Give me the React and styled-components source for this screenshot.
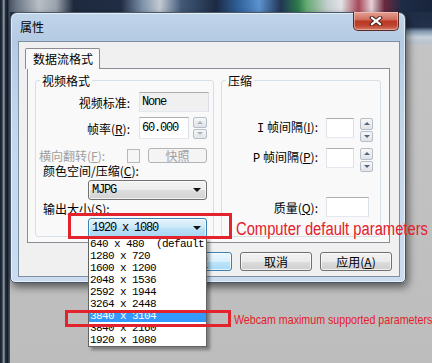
import React from "react";
import styled, { createGlobalStyle } from "styled-components";

const GlobalStyle = createGlobalStyle`
  html, body {
    margin: 0;
    padding: 0;
  }
  body {
    width: 432px;
    height: 363px;
    overflow: hidden;
    font-family: "Noto Sans CJK SC", "Liberation Sans", sans-serif;
    font-size: 12px;
  }
`;

const Screen = styled.div`
  position: relative;
  width: 432px;
  height: 363px;
  overflow: hidden;
  box-sizing: border-box;
  padding: 12px 0 0 10px;
  display: flex;
  align-items: flex-start;
  background:
    linear-gradient(90deg, #141b25 0, #2c3746 2px, #5d6c80 3px, #a7b4c2 4px, #2a3442 5px, #111821 8px, #4c5a6b 9px, #39444f 10px, transparent 10px) left top / 10px 100% no-repeat,
    linear-gradient(90deg, #1b2536 0%, #6f7a88 4%, #b9bfc6 9%, #9aa3ad 13%, #1e2a3e 17%, #202d44 28%, #7f93aa 33%, #c3cbd4 37%, #425a78 42%, #1c2b43 50%, #2f5f98 55%, #5b93cf 60%, #223655 65%, #2c7b4c 69%, #67ab74 71%, #c8d0d2 76%, #e0e2e6 79%, #a8485a 83%, #e7d2d8 86%, #6b2a3e 89%, #1e2c46 93%, #18243a 100%) left top / 100% 12px no-repeat,
    linear-gradient(180deg, #1d2a42 0, #22304a 27px, #7e93ab 31px, #c6d0da 37px, #b9c4cf 42px, #c4c4c4 46px, #bdbdbd 100%);
`;

const Dialog = styled.div`
  position: relative;
  width: 396px;
  height: 271px;
  box-sizing: border-box;
  border: 1px solid #46566a;
  border-radius: 7px 7px 5px 5px;
  background: linear-gradient(180deg, #c1d5ea 0%, #b5cbe3 10%, #c4d7ec 45%, #cbdcef 100%);
  box-shadow: 2px 4px 9px rgba(0, 0, 0, 0.55), inset 0 0 0 1px rgba(255, 255, 255, 0.6);
  padding: 0 5px 5px 7px;
  display: flex;
  flex-direction: column;
`;

const TitleBar = styled.div`
  height: 28px;
  display: flex;
  align-items: center;
  justify-content: space-between;
  padding-left: 2px;
`;

const Title = styled.span`
  font-size: 12px;
  line-height: 14px;
  color: #000;
`;

const CloseButton = styled.div`
  align-self: flex-start;
  margin-top: -1px;
  margin-right: 1px;
  width: 46px;
  height: 19px;
  box-sizing: border-box;
  border: 1px solid #5b2a26;
  border-top: none;
  border-radius: 0 0 5px 5px;
  background: linear-gradient(180deg, #e3a195 0%, #d27260 40%, #bb3924 52%, #bd4430 75%, #d57c68 100%);
  box-shadow: inset 0 0 0 1px rgba(255, 220, 210, 0.45);
  display: flex;
  align-items: center;
  justify-content: center;
`;

const Client = styled.div`
  flex: 1;
  background: #f0f0f0;
  border: 1px solid #7f8fa3;
  display: flex;
  flex-direction: column;
  padding: 6px 7px 5px 6px;
`;

const TabStrip = styled.div`
  display: flex;
  height: 21px;
`;

const Tab = styled.div`
  position: relative;
  z-index: 1;
  height: 21px;
  box-sizing: border-box;
  padding: 3px 6px 0 7px;
  border: 1px solid #898c95;
  border-bottom: none;
  border-radius: 2px 2px 0 0;
  background: #f9f9f9;
  font-size: 12px;
  line-height: 14px;
`;

const Panel = styled.div`
  width: 363px;
  height: 175px;
  margin: -1px 0 0 2px;
  box-sizing: border-box;
  border: 1px solid #898c95;
  background: #f9f9f9;
  display: flex;
  gap: 7px;
  padding: 5px 8px 5px 7px;
`;

const Group = styled.fieldset`
  width: ${(p) => p.$w}px;
  height: 163px;
  box-sizing: border-box;
  margin: 0;
  padding: 0;
  min-width: 0;
  border: 1px solid #d5dfe5;
  border-radius: 3px;
`;

const Legend = styled.legend`
  font-size: 12px;
  line-height: 13px;
  padding: 0 2px;
  margin-left: 4px;
`;

const Row = styled.div`
  position: relative;
  display: flex;
  align-items: ${(p) => p.$align || "center"};
  height: ${(p) => p.$h}px;
  margin-top: ${(p) => p.$mt || 0}px;
`;

const Label = styled.span`
  flex-shrink: 0;
  box-sizing: border-box;
  width: ${(p) => (p.$w ? `${p.$w}px` : "auto")};
  padding-left: ${(p) => p.$indent || 0}px;
  padding-top: ${(p) => p.$pt || 0}px;
  text-align: ${(p) => (p.$right ? "right" : "left")};
  color: ${(p) => (p.$disabled ? "#a0a0a0" : "#000")};
  font-size: 12px;
  line-height: 13px;
  white-space: nowrap;
`;

const Latin = styled.span`
  font-family: "Liberation Mono", monospace;
  font-size: 12px;
`;

const Edit = styled.div`
  flex-shrink: 0;
  width: ${(p) => p.$w}px;
  height: ${(p) => p.$h || 20}px;
  margin-left: ${(p) => p.$ml || 0}px;
  box-sizing: border-box;
  border: 1px solid;
  border-color: #abadb3 #dbdfe6 #e3e9ef #e2e3ea;
  background: ${(p) => (p.$readOnly ? "#f0f0f0" : "#fff")};
  padding-left: 2px;
  display: flex;
  align-items: center;
  font-family: "Liberation Mono", monospace;
  font-size: 12px;
  letter-spacing: -1.2px;
  color: #000;
`;

const Spin = styled.div`
  flex-shrink: 0;
  display: flex;
  flex-direction: column;
  gap: 1px;
  width: ${(p) => p.$w}px;
  height: ${(p) => p.$h}px;
  margin-left: ${(p) => p.$ml}px;
`;

const SpinButton = styled.div`
  flex: 1;
  box-sizing: border-box;
  border: 1px solid #b7bec8;
  border-radius: 2px;
  background: linear-gradient(180deg, #f7f7f7, #e0e3e7);
  display: flex;
  align-items: center;
  justify-content: center;
  &::after {
    content: "";
    border-left: 3px solid transparent;
    border-right: 3px solid transparent;
    ${(p) =>
      p.$down
        ? `border-top: 3px solid ${p.$pale ? "#a9b3bf" : "#52657e"};`
        : `border-bottom: 3px solid ${p.$pale ? "#a9b3bf" : "#52657e"};`}
  }
`;

const CheckBox = styled.div`
  flex-shrink: 0;
  width: 13px;
  height: 14px;
  box-sizing: border-box;
  border: 1px solid #b9b9b9;
  background: #f6f6f6;
`;

const SmallButton = styled.div`
  flex-shrink: 0;
  width: 59px;
  height: 15px;
  margin-left: 8px;
  box-sizing: border-box;
  border: 1px solid #b0b5b9;
  border-radius: 3px;
  background: #f4f4f4;
  color: #a0a0a0;
  font-size: 12px;
  line-height: 13px;
  text-align: center;
`;

const Combo = styled.div`
  position: relative;
  flex-shrink: 0;
  width: 119px;
  height: 20px;
  margin-left: 52px;
  box-sizing: border-box;
  border: 1px solid ${(p) => (p.$open ? "#3c7fb1" : "#707070")};
  border-radius: 3px;
  background: ${(p) =>
    p.$open
      ? "linear-gradient(180deg, #e4f3fc 0%, #cfe9f9 45%, #b9dff6 55%, #a6d5f2 100%)"
      : "linear-gradient(180deg, #f3f3f3 0%, #ececec 50%, #dedede 51%, #d2d2d2 100%)"};
  box-shadow: inset 0 0 0 1px rgba(255, 255, 255, 0.7);
  padding-left: 3px;
  display: flex;
  align-items: center;
  font-family: "Liberation Mono", monospace;
  font-size: 12px;
  letter-spacing: -1.2px;
  color: #000;
  &::after {
    content: "";
    position: absolute;
    right: 5px;
    top: 7px;
    border-left: 4px solid transparent;
    border-right: 4px solid transparent;
    border-top: 4px solid #111;
  }
`;

const DropList = styled.div`
  position: absolute;
  z-index: 10;
  left: -1px;
  top: 100%;
  width: 119px;
  box-sizing: border-box;
  border: 1px solid #646464;
  background: #fff;
  box-shadow: 3px 3px 3px rgba(0, 0, 0, 0.35);
  overflow: hidden;
`;

const DropItem = styled.div`
  height: 12px;
  line-height: 12px;
  padding-left: 1px;
  white-space: pre;
  font-family: "Liberation Mono", monospace;
  font-size: 11px;
  letter-spacing: -0.6px;
  background: ${(p) => (p.$selected ? "#3399ff" : "transparent")};
  color: ${(p) => (p.$selected ? "#fff" : "#000")};
`;

const ButtonRow = styled.div`
  display: flex;
  justify-content: flex-end;
  gap: 8px;
  margin-top: 9px;
  height: 19px;
`;

const Button = styled.div`
  width: 72px;
  height: 19px;
  box-sizing: border-box;
  border: 1px solid ${(p) => (p.$default ? "#3c7fb1" : "#707070")};
  border-radius: 3px;
  background: ${(p) =>
    p.$default
      ? "linear-gradient(180deg, #eaf6fd 0%, #d9f0fc 50%, #bee6fd 51%, #a7d9f5 100%)"
      : "linear-gradient(180deg, #f2f2f2 0%, #ebebeb 50%, #dddddd 51%, #cfcfcf 100%)"};
  box-shadow: inset 0 0 0 1px rgba(255, 255, 255, 0.7);
  font-size: 12px;
  line-height: 17px;
  text-align: center;
  color: #000;
`;

const Mark = styled.div`
  position: absolute;
  z-index: 20;
  left: ${(p) => p.$x}px;
  top: ${(p) => p.$y}px;
  width: ${(p) => p.$w}px;
  height: ${(p) => p.$h}px;
  box-sizing: border-box;
  border: 3px solid #e2232d;
`;

const Note = styled.div`
  position: absolute;
  z-index: 20;
  left: ${(p) => p.$x}px;
  top: ${(p) => p.$y}px;
  font-family: "Liberation Sans", Arial, sans-serif;
  font-size: ${(p) => p.$size}px;
  line-height: ${(p) => p.$size}px;
  color: #e4202b;
  white-space: nowrap;
  transform: scaleX(0.82);
  transform-origin: left top;
`;

const sizes = [
  "640 x 480  (default)",
  "1280 x 720",
  "1600 x 1200",
  "2048 x 1536",
  "2592 x 1944",
  "3264 x 2448",
  "3840 x 3104",
  "3840 x 2160",
  "1920 x 1080",
];

const CloseIcon = () => (
  <svg width="14" height="10" viewBox="0 0 14 10">
    <path d="M3 1.8 L11 8.2 M11 1.8 L3 8.2" stroke="#3a1714" strokeWidth="4" strokeLinecap="square" />
    <path d="M3 1.8 L11 8.2 M11 1.8 L3 8.2" stroke="#fff" strokeWidth="2.2" strokeLinecap="square" />
  </svg>
);

export default function App() {
  return (
    <>
      <GlobalStyle />
      <Screen>
        <Dialog>
          <TitleBar>
            <Title>属性</Title>
            <CloseButton>
              <CloseIcon />
            </CloseButton>
          </TitleBar>
          <Client>
            <TabStrip>
              <Tab>数据流格式</Tab>
            </TabStrip>
            <Panel>
              <Group $w={179}>
                <Legend>视频格式</Legend>
                <Row $h={20} $mt={5}>
                  <Label $w={94} $right>视频标准:</Label>
                  <Edit $w={70} $ml={9} $readOnly>None</Edit>
                </Row>
                <Row $h={22} $mt={5}>
                  <Label $w={94} $right>帧率(<u>R</u>):</Label>
                  <Edit $w={50} $h={22} $ml={9}>60.000</Edit>
                  <Spin $w={14} $h={22} $ml={4}>
                    <SpinButton $pale />
                    <SpinButton $pale $down />
                  </Spin>
                </Row>
                <Row $h={15} $mt={9}>
                  <Label $w={91} $indent={3} $disabled>横向翻转(<u>F</u>):</Label>
                  <CheckBox />
                  <SmallButton>快照</SmallButton>
                </Row>
                <Row $h={13} $mt={1}>
                  <Label $indent={7}>颜色空间/压缩(<u>C</u>):</Label>
                </Row>
                <Row $h={20} $mt={3}>
                  <Combo>MJPG</Combo>
                </Row>
                <Row $h={13} $mt={2}>
                  <Label $indent={7}>输出大小(<u>S</u>):</Label>
                </Row>
                <Row $h={20} $mt={3}>
                  <Combo $open>
                    1920 x 1080
                    <DropList>
                      {sizes.map((s, i) => (
                        <DropItem key={i} $selected={i === 6}>
                          {s}
                        </DropItem>
                      ))}
                    </DropList>
                  </Combo>
                </Row>
              </Group>
              <Group $w={160}>
                <Legend>压缩</Legend>
                <Row $h={24} $mt={31} $align="flex-start">
                  <Label $w={96} $right $pt={2}>
                    <Latin>I</Latin> 帧间隔(<u>I</u>):
                  </Label>
                  <Edit $w={28} $ml={8} />
                  <Spin $w={13} $h={24} $ml={6}>
                    <SpinButton />
                    <SpinButton $down />
                  </Spin>
                </Row>
                <Row $h={24} $mt={6} $align="flex-start">
                  <Label $w={96} $right $pt={2}>
                    <Latin>P</Latin> 帧间隔(<u>P</u>):
                  </Label>
                  <Edit $w={28} $ml={8} />
                  <Spin $w={13} $h={24} $ml={6}>
                    <SpinButton />
                    <SpinButton $down />
                  </Spin>
                </Row>
                <Row $h={20} $mt={25}>
                  <Label $w={96} $right>质量(<u>Q</u>):</Label>
                  <Edit $w={43} $ml={8} />
                </Row>
              </Group>
            </Panel>
            <ButtonRow>
              <Button $default>确定</Button>
              <Button>取消</Button>
              <Button>应用(<u>A</u>)</Button>
            </ButtonRow>
          </Client>
        </Dialog>

        <Mark $x={68} $y={213} $w={164} $h={26} />
        <Note $x={236} $y={220} $size={18}>Computer default parameters</Note>
        <Mark $x={65} $y={310} $w={166} $h={17} />
        <Note $x={234} $y={313} $size={13}>Webcam maximum supported parameters</Note>
      </Screen>
    </>
  );
}
